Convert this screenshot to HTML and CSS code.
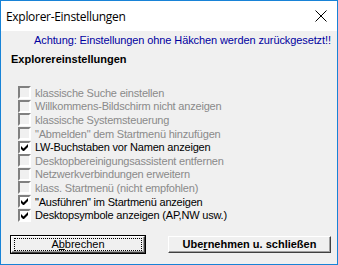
FILE: index.html
```html
<!DOCTYPE html>
<html lang="de">
<head>
    <meta charset="UTF-8">
    <title>Explorer-Einstellungen</title>
    <link rel="stylesheet" href="styles.css">
</head>
<body>
    <div class="window">
        <div class="titlebar">
            <span class="title">Explorer-Einstellungen</span>
            <svg class="close" width="12" height="12" viewBox="0 0 12 12">
                <path d="M0.5 0.5 L11.5 11.5 M11.5 0.5 L0.5 11.5" stroke="#000" stroke-width="1" fill="none"/>
            </svg>
        </div>

        <div class="client">
            <p class="warning">Achtung: Einstellungen ohne Häkchen werden zurückgesetzt!!</p>
            <h1>Explorereinstellungen</h1>

            <ul class="options">
                <li class="disabled"><span class="box"></span>klassische Suche einstellen</li>
                <li class="disabled"><span class="box"></span>Willkommens-Bildschirm nicht anzeigen</li>
                <li class="disabled"><span class="box"></span>klassische Systemsteuerung</li>
                <li class="disabled"><span class="box"></span>"Abmelden" dem Startmenü hinzufügen</li>
                <li class="checked"><span class="box"><svg width="7" height="7" viewBox="0 0 7 7"><path d="M0 2v3l2 2h1l4-4V0L2.5 4.5z" fill="#000"/></svg></span>LW-Buchstaben vor Namen anzeigen</li>
                <li class="disabled"><span class="box"></span>Desktopbereinigungsassistent entfernen</li>
                <li class="disabled"><span class="box"></span>Netzwerkverbindungen erweitern</li>
                <li class="disabled"><span class="box"></span>klass. Startmenü (nicht empfohlen)</li>
                <li class="checked"><span class="box"><svg width="7" height="7" viewBox="0 0 7 7"><path d="M0 2v3l2 2h1l4-4V0L2.5 4.5z" fill="#000"/></svg></span>"Ausführen" im Startmenü anzeigen</li>
                <li class="checked"><span class="box"><svg width="7" height="7" viewBox="0 0 7 7"><path d="M0 2v3l2 2h1l4-4V0L2.5 4.5z" fill="#000"/></svg></span>Desktopsymbole anzeigen (AP,NW usw.)</li>
            </ul>

            <div class="buttons">
                <button class="btn cancel"><span class="focus">A<u>b</u>brechen</span></button>
                <button class="btn apply">Ube<u>r</u>nehmen u. schließen</button>
            </div>
        </div>
    </div>
</body>
</html>
```

FILE: styles.css
```css
body {
    margin: 0;
    font-family: "Liberation Sans", Arial, sans-serif;
    font-size: 11px;
    letter-spacing: -0.2px;
    color: #000;
}

.window {
    width: 338px;
    height: 265px;
    box-sizing: border-box;
    border: 1px solid #1883d7;
    display: flex;
    flex-direction: column;
    background-color: #f0f0f0;
}

.titlebar {
    height: 30px;
    background-color: #fff;
    display: flex;
    align-items: center;
    justify-content: space-between;
    padding: 0 10px 0 5px;
    flex-shrink: 0;
}

.title {
    font-family: "Open Sans", "Noto Sans", sans-serif;
    font-size: 12px;
    letter-spacing: -0.3px;
}

.client {
    flex: 1;
    display: flex;
    flex-direction: column;
    padding: 2px 0 0 0;
}

.warning {
    margin: 0;
    padding-left: 33px;
    color: #0000a0;
    line-height: 14px;
    letter-spacing: -0.1px;
}

h1 {
    margin: 5px 0 0 10px;
    font-size: 11px;
    font-weight: bold;
    line-height: 14px;
    letter-spacing: 0;
}

.options {
    list-style: none;
    margin: 20px 0 0 0;
    padding: 0 0 0 17px;
}

.options li {
    display: flex;
    align-items: center;
    height: 13.6px;
}

.box {
    width: 9px;
    height: 9px;
    border-style: solid;
    border-width: 2px;
    border-color: #808080 #fff #fff #808080;
    margin-right: 4px;
    background-color: #fff;
    display: flex;
    align-items: center;
    justify-content: center;
}

.disabled {
    color: #8a8a8a;
}

.disabled .box {
    background-color: #f0f0f0;
}

.buttons {
    display: flex;
    justify-content: space-between;
    padding: 0 6px 0 10px;
    margin-top: 14px;
}

.btn {
    font-family: "Liberation Sans", Arial, sans-serif;
    font-size: 11px;
    height: 17px;
    padding: 0;
    background-color: #f0f0f0;
    border-style: solid;
    border-width: 1px;
    border-color: #fff #404040 #404040 #fff;
    box-shadow: inset -1px -1px 0 #a0a0a0;
}

.cancel {
    width: 134px;
    outline: 1px solid #000;
}

.focus {
    display: block;
    margin: 1px 2px;
    border: 1px dotted #000;
    line-height: 11px;
}

.apply {
    width: 163px;
    font-weight: bold;
}
```
